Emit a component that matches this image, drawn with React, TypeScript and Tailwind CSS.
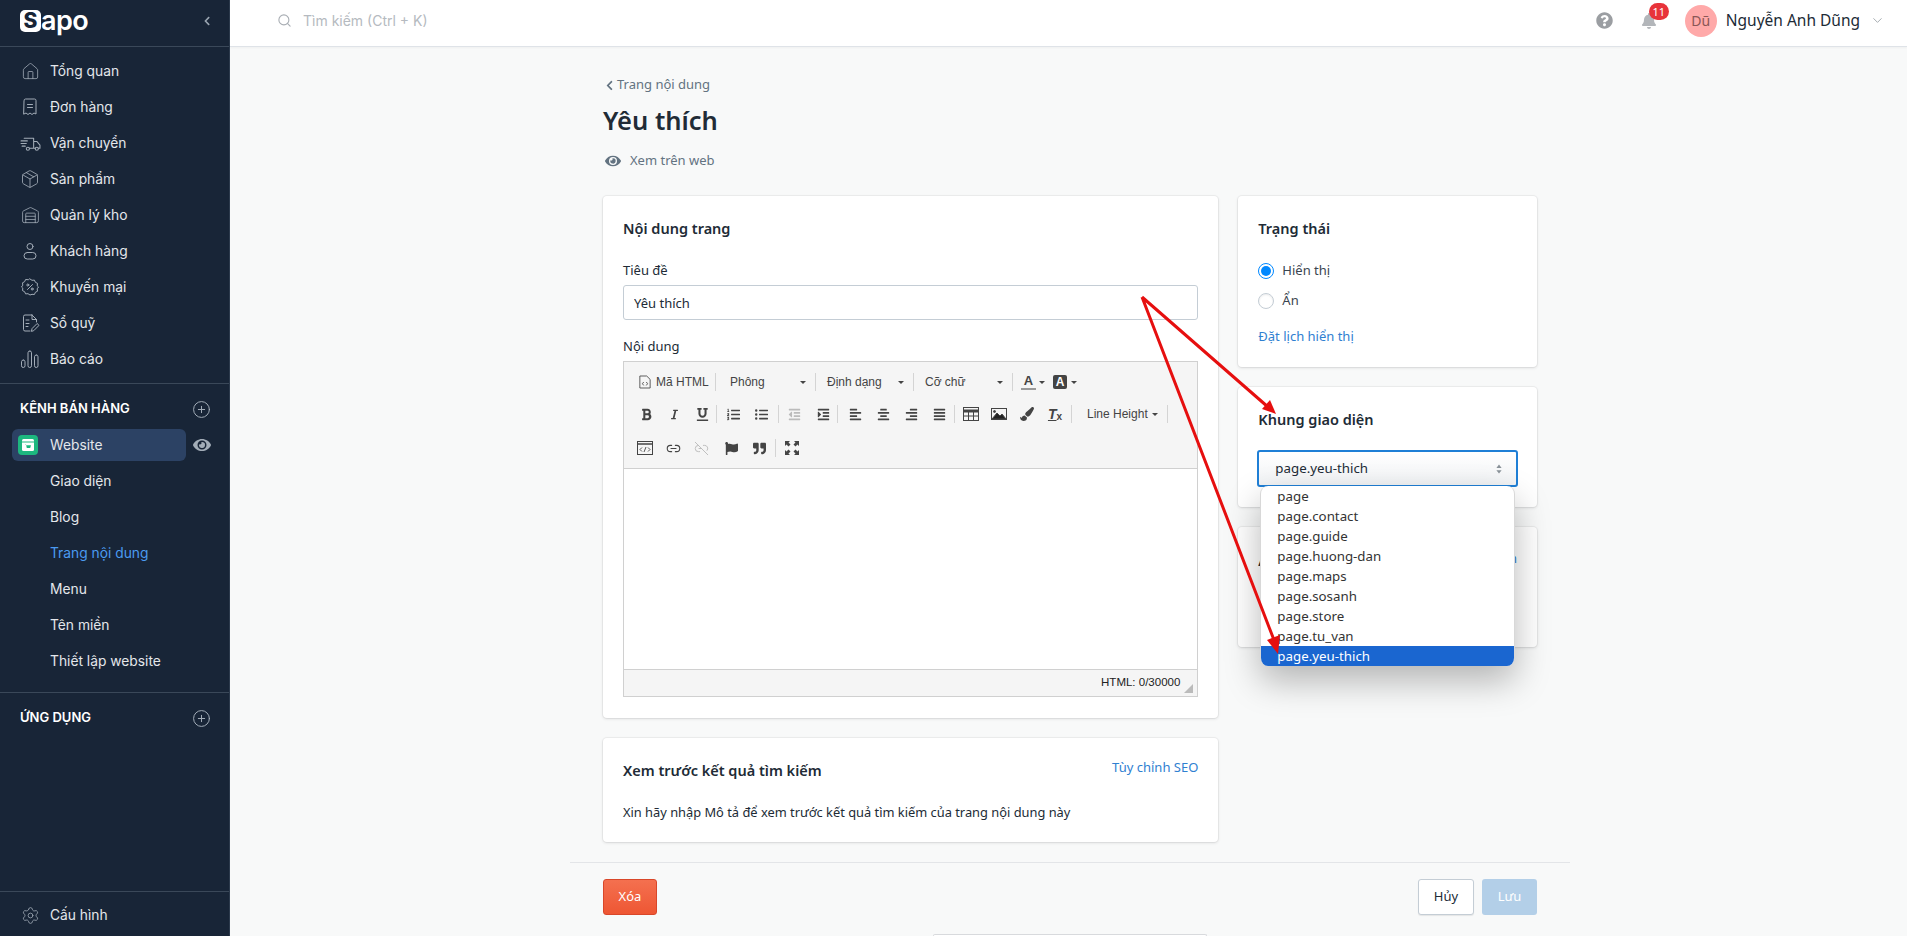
import { ReactNode } from 'react';
import {
    FaAlignCenter, FaAlignJustify, FaAlignLeft, FaAlignRight, FaBell, FaBold, FaChevronLeft, FaEye, FaIndent,
    FaItalic, FaListOl, FaListUl, FaOutdent, FaPaintBrush, FaQuestionCircle, FaQuoteRight, FaFlag, FaUnderline,
} from 'react-icons/fa';
import { ChevronDown, CirclePlus, House, Link2, Link2Off, Package, Search, Settings, Warehouse } from 'lucide-react';

const Svg = ({ children, className = 'w-5 h-5' }: { children: ReactNode; className?: string }) => (
    <svg viewBox="0 0 20 20" fill="none" stroke="currentColor" strokeWidth="1" strokeLinecap="round" strokeLinejoin="round" className={className}>
        {children}
    </svg>
);

const navItems: { label: string; icon: ReactNode }[] = [
    { label: 'Tổng quan', icon: <House size={19} strokeWidth={1} /> },
    {
        label: 'Đơn hàng',
        icon: (
            <Svg>
                <path d="M4 3.5a1.5 1.5 0 0 1 1.500-1.500h9a1.500 1.500 0 0 1 1.500 1.500v13.500l-2-1-2 1.500-2-1.500-2 1.500-2-1.500-2 1z" />
                <path d="M7.500 7.500h5M7.500 10.500h5" />
            </Svg>
        ),
    },
    {
        label: 'Vận chuyển',
        icon: (
            <Svg className="w-[21px] h-[21px]">
                <path d="M4 5h9v9.500H9M13 8h3l3 3.500v3h-1.500M13 14.500h1.500" />
                <circle cx="7.500" cy="15" r="1.500" />
                <circle cx="16" cy="15" r="1.500" />
                <path d="M1 7.500h6M1 10h5M2 12.500h3" />
            </Svg>
        ),
    },
    { label: 'Sản phẩm', icon: <Package size={20} strokeWidth={1} /> },
    { label: 'Quản lý kho', icon: <Warehouse size={19} strokeWidth={1} /> },
    {
        label: 'Khách hàng',
        icon: (
            <Svg>
                <circle cx="10" cy="5.500" r="3" />
                <rect x="4" y="11.500" width="12" height="6.500" rx="3.250" />
            </Svg>
        ),
    },
    {
        label: 'Khuyến mại',
        icon: (
            <Svg>
                <path d="M10 2l2 1.300 2.400-.2 1 2.200 2.100 1.100-.3 2.400L18.500 10l-1.300 1.800.3 2.400-2.100 1.100-1 2.200-2.400-.2L10 18l-2-1.300-2.400.2-1-2.200-2.100-1.100.3-2.400L1.500 10l1.300-1.800-.3-2.400 2.100-1.100 1-2.200 2.400.2z" />
                <path d="M7.500 12.500l5-5" />
                <circle cx="7.800" cy="8" r="1" />
                <circle cx="12.200" cy="12" r="1" />
            </Svg>
        ),
    },
    {
        label: 'Sổ quỹ',
        icon: (
            <Svg>
                <path d="M12 2H5a1.500 1.500 0 0 0-1.500 1.500v13A1.500 1.500 0 0 0 5 18h5M12 2l4.500 4.500V9M12 2v4.500h4.500" />
                <path d="M6 7h3M6 10.500h3M6 13.500h2" />
                <path d="M11.500 18l.6-2.500 5-5 1.900 1.900-5 5z" />
            </Svg>
        ),
    },
    {
        label: 'Báo cáo',
        icon: (
            <Svg>
                <rect x="1.500" y="11" width="3.500" height="7.500" rx="1.750" />
                <rect x="8" y="2" width="3.500" height="16.500" rx="1.750" />
                <rect x="14.500" y="6" width="3.500" height="12.500" rx="1.750" />
            </Svg>
        ),
    },
];

const subItems = ['Giao diện', 'Blog', 'Trang nội dung', 'Menu', 'Tên miền', 'Thiết lập website'];
const templates = ['page', 'page.contact', 'page.guide', 'page.huong-dan', 'page.maps', 'page.sosanh', 'page.store', 'page.tu_van', 'page.yeu-thich'];

function Sidebar() {
    return (
        <aside className="w-[230px] h-[936px] shrink-0 flex flex-col bg-[#182537] text-[13.8px] text-[#e4e7eb] font-['Inter',sans-serif] border-r border-[#2c3a4c]">
            <div className="h-[47px] flex items-center justify-between pl-5 pr-[17px] border-b border-[#3a4859]">
                <div className="flex items-center h-[24px] mb-[5px]">
                    <span className="w-[21px] h-[22px] rounded-[5px] bg-white text-[#182537] text-[21px] leading-[22px] font-extrabold text-center">S</span>
                    <span className="text-white text-[27px] leading-[24px] font-semibold tracking-[-0.5px]">apo</span>
                </div>
                <FaChevronLeft size={10} className="text-[#9aa5b1] mb-[5px]" />
            </div>
            <nav className="flex flex-col py-[6px] border-b border-[#3a4859]">
                {navItems.map(item => (
                    <div key={item.label} className="h-9 flex items-center">
                        <span className="w-[50px] pl-[18px] pr-2 flex justify-center text-[#a3adb8]">{item.icon}</span>
                        <span>{item.label}</span>
                    </div>
                ))}
            </nav>
            <div className="pt-[13px] pb-[13px] border-b border-[#3a4859]">
                <div className="h-6 flex items-center justify-between pl-5 pr-[18px] font-semibold text-white text-[13px]">
                    <span>KÊNH BÁN HÀNG</span>
                    <CirclePlus size={19} strokeWidth={1.25} className="text-[#a3adb8]" />
                </div>
                <div className="mt-2 h-8 flex items-center pr-[18px]">
                    <div className="ml-3 w-[174px] h-8 rounded-[6px] bg-[#2c4264] flex items-center pl-[6px]">
                        <span className="w-5 h-5 rounded-[4px] bg-[#1db77f] flex items-center justify-center">
                            <svg viewBox="0 0 14 14" className="w-[14px] h-[14px]">
                                <rect x="1" y="1" width="12" height="12" rx="1.500" fill="#fff" />
                                <rect x="1" y="3.500" width="12" height="1" fill="#1db77f" />
                                <path d="M4 6.500h1l.8 3.500h3.400l.8-2.800H5.200" fill="#1db77f" />
                            </svg>
                        </span>
                        <span className="ml-3">Website</span>
                    </div>
                    <FaEye size={18} className="ml-auto text-[#a3adb8]" />
                </div>
                <div className="mt-[2px] flex flex-col">
                    {subItems.map(s => (
                        <div key={s} className={`h-9 flex items-center pl-[50px] ${s === 'Trang nội dung' ? 'text-[#4b9bf0]' : ''}`}>{s}</div>
                    ))}
                </div>
            </div>
            <div className="flex-1 pt-[13px]">
                <div className="h-6 flex items-center justify-between pl-5 pr-[18px] font-semibold text-white text-[13px]">
                    <span>ỨNG DỤNG</span>
                    <CirclePlus size={19} strokeWidth={1.25} className="text-[#a3adb8]" />
                </div>
            </div>
            <div className="h-[45px] pt-[3px] flex items-center border-t border-[#3a4859]">
                <span className="w-[50px] pl-[18px] pr-2 flex justify-center text-[#a3adb8]"><Settings size={19} strokeWidth={1} /></span>
                <span>Cấu hình</span>
            </div>
        </aside>
    );
}

function TopBar() {
    return (
        <header className="h-[47px] pb-[5px] bg-white border-b border-[#dfe3e8] shadow-[0_1px_2px_rgba(0,0,0,0.04)] flex items-center pl-[47px] pr-[22px]">
            <Search size={15} strokeWidth={1.75} className="text-[#a8adb3]" />
            <span className="ml-[11px] text-[14px] text-[#b5bac0] font-['Inter',sans-serif]">Tìm kiếm (Ctrl + K)</span>
            <div className="ml-auto flex items-center">
                <FaQuestionCircle size={17} className="text-[#9b9ea2]" />
                <div className="relative ml-[28px] mr-[28px]">
                    <FaBell size={16} className="text-[#b3b6ba]" />
                    <span className="absolute -top-[10px] left-[8px] w-[20px] h-[17px] rounded-full bg-[#e8333a] text-white text-[11px] leading-[17px] text-center">11</span>
                </div>
                <span className="w-8 h-8 rounded-full bg-[#ffa9a9] text-[#8a5656] text-[14px] flex items-center justify-center">Dũ</span>
                <span className="ml-[9px] text-[15.5px] text-[#212b36]">Nguyễn Anh Dũng</span>
                <ChevronDown size={15} strokeWidth={1.5} className="ml-[10px] text-[#a0a6ac]" />
            </div>
        </header>
    );
}

const Sep = ({ className = '' }: { className?: string }) => <span className={`w-px h-[18px] bg-[#d4d4d4] ${className}`} />;
const Caret = ({ className = '' }: { className?: string }) => (
    <span className={`w-0 h-0 border-l-[3px] border-r-[3px] border-t-[3px] border-l-transparent border-r-transparent border-t-[#444] ${className}`} />
);
const Cell = ({ children, className = '' }: { children: ReactNode; className?: string }) => (
    <span className={`w-7 flex items-center justify-center ${className}`}>{children}</span>
);

function Toolbar() {
    return (
        <div className="h-[107px] bg-[#f5f5f5] border-b border-[#d0d0d0] text-[12px] text-[#444] font-['Liberation_Sans',sans-serif]">
            <div className="h-9 pt-1 flex items-center whitespace-nowrap">
                <svg viewBox="0 0 14 16" className="ml-[15px] w-3 h-[14px]" fill="none" stroke="#444" strokeWidth="1">
                    <path d="M1 1h8l4 4v10H1z" />
                    <path d="M5.500 8L4 10l1.500 2M8.500 8l1.500 2-1.500 2" />
                </svg>
                <span className="ml-[5px] w-[51px]">Mã HTML</span>
                <Sep className="ml-2" />
                <span className="ml-[14px] w-[70px]">Phông</span>
                <Caret />
                <Sep className="ml-[9px]" />
                <span className="ml-[11px] w-[71px]">Định dạng</span>
                <Caret />
                <Sep className="ml-[9px]" />
                <span className="ml-[11px] w-[72px]">Cỡ chữ</span>
                <Caret />
                <Sep className="ml-[9px]" />
                <span className="ml-[8px] w-[15px] text-center text-[13px] leading-[14px] font-bold border-b-[2px] border-[#999]">A</span>
                <Caret className="ml-[3px]" />
                <span className="ml-[8px] w-[14px] h-[14px] rounded-[2px] bg-[#444] text-white text-[12px] leading-[14px] text-center font-bold">A</span>
                <Caret className="ml-[4px]" />
            </div>
            <div className="h-[32px] pl-2 flex items-center text-[#444] whitespace-nowrap">
                <Cell><FaBold size={13} /></Cell>
                <Cell><FaItalic size={11} /></Cell>
                <Cell><FaUnderline size={13} /></Cell>
                <Sep />
                <Cell className="ml-[2px]"><FaListOl size={13} /></Cell>
                <Cell><FaListUl size={13} /></Cell>
                <Sep className="ml-[3px]" />
                <Cell className="ml-[1px] text-[#bbb]"><FaOutdent size={13} /></Cell>
                <Cell className="ml-[1px]"><FaIndent size={13} /></Cell>
                <Sep />
                <Cell className="ml-[3px]"><FaAlignLeft size={13} /></Cell>
                <Cell><FaAlignCenter size={13} /></Cell>
                <Cell><FaAlignRight size={13} /></Cell>
                <Cell><FaAlignJustify size={13} /></Cell>
                <Sep className="ml-[1px]" />
                <Cell className="ml-[2px]">
                    <svg viewBox="0 0 16 14" className="w-4 h-[14px]" fill="none" stroke="#444">
                        <rect x="0.500" y="0.500" width="15" height="13" />
                        <path d="M0 4h16" strokeWidth="3" />
                        <path d="M5.500 4v10M10.500 4v10M0 9h16" />
                    </svg>
                </Cell>
                <Cell>
                    <svg viewBox="0 0 16 12" className="w-4 h-3" fill="none" stroke="#444">
                        <rect x="0.500" y="0.500" width="15" height="11" />
                        <circle cx="3.500" cy="3.500" r="1" fill="#444" />
                        <path d="M1 11l5-6 3 3 2-2 4 5z" fill="#222" />
                    </svg>
                </Cell>
                <Cell><FaPaintBrush size={14} /></Cell>
                <Cell className="relative">
                    <span className="text-[14px] leading-[14px] font-bold italic underline">T</span>
                    <span className="text-[10px] leading-[10px] mt-[6px] font-bold">x</span>
                </Cell>
                <Sep className="ml-[2px]" />
                <span className="ml-[15px] w-[65px]">Line Height</span>
                <Caret />
                <Sep className="ml-[9px]" />
            </div>
            <div className="h-9 pl-[7px] flex items-center">
                <Cell>
                    <svg viewBox="0 0 16 14" className="w-4 h-[14px]" fill="none" stroke="#444">
                        <rect x="0.500" y="0.500" width="15" height="13" />
                        <path d="M0 3h16" strokeWidth="1.500" />
                        <path d="M5 6.500L3 8.500l2 2M11 6.500l2 2-2 2M9 6l-2 5" strokeWidth="0.900" />
                    </svg>
                </Cell>
                <Cell><Link2 size={15} strokeWidth={1.75} /></Cell>
                <Cell className="text-[#bbb]"><Link2Off size={15} strokeWidth={1.5} /></Cell>
                <Cell className="ml-[2px]"><FaFlag size={13} /></Cell>
                <Cell><FaQuoteRight size={13} /></Cell>
                <Sep className="ml-[2px]" />
                <Cell className="ml-[2px]">
                    <svg viewBox="0 0 14 14" className="w-[14px] h-[14px]" fill="#444">
                        <path d="M0 0h5L3.500 1.500 5.500 3.500 3.500 5.500 1.500 3.500 0 5zM14 0v5l-1.500-1.500-2 2-2-2 2-2L9 0zM0 14V9l1.500 1.500 2-2 2 2-2 2L5 14zM14 14H9l1.500-1.500-2-2 2-2 2 2L14 9z" />
                    </svg>
                </Cell>
            </div>
        </div>
    );
}

function Card({ className = '', children }: { className?: string; children: ReactNode }) {
    return <section className={`bg-white rounded-[4px] shadow-[0_0_0_1px_rgba(63,63,68,0.05),0_1px_3px_rgba(63,63,68,0.15)] ${className}`}>{children}</section>;
}

function Radio({ checked, label }: { checked?: boolean; label: string }) {
    return (
        <div className="h-5 flex items-center">
            <span className={`w-4 h-4 rounded-full flex items-center justify-center ${checked ? 'border border-[#0088ff]' : 'border border-[#c4cdd5] shadow-[inset_0_1px_2px_rgba(0,0,0,0.08)]'}`}>
                {checked && <span className="w-[10px] h-[10px] rounded-full bg-[#0088ff]" />}
            </span>
            <span className="ml-2 text-[#3a4550]">{label}</span>
        </div>
    );
}

function Arrows() {
    return (
        <svg className="absolute z-20 inset-0 w-[1907px] h-[936px] pointer-events-none" viewBox="0 0 1907 936">
            <path d="M1142 297L1268 407M1142 297L1274 640" stroke="#e60f0f" strokeWidth="3" fill="none" />
            <polygon points="1276,414 1262,409 1270,400" fill="#e60f0f" />
            <polygon points="1278,654 1267,640 1280,635" fill="#e60f0f" />
        </svg>
    );
}

export default function App() {
    return (
        <div className="relative w-[1907px] h-[936px] overflow-hidden flex bg-[#f8f9f9] text-[14px] text-[#212b36] font-['Noto_Sans',sans-serif]">
            <Sidebar />
            <div className="flex-1 min-w-0">
                <TopBar />
                <main className="w-[1000px] ml-[340px]">
                    <div className="px-[33px] pt-[28px]">
                        <div className="h-5 flex items-center text-[#637381] text-[13px]">
                            <FaChevronLeft size={11} className="ml-[1px]" />
                            <span className="ml-[2px]">Trang nội dung</span>
                        </div>
                        <h1 className="mt-[7px] h-9 text-[25.5px] leading-9 font-semibold">Yêu thích</h1>
                        <div className="mt-[13px] h-5 flex items-center text-[#637381] text-[13px]">
                            <FaEye size={16} className="ml-[2px]" />
                            <span className="ml-[9px]">Xem trên web</span>
                        </div>
                        <div className="mt-[25px] flex gap-5 items-start">
                            <div className="w-[616px] flex flex-col gap-5">
                                <Card className="h-[522px] px-5 pt-[21px]">
                                    <h2 className="h-[22px] leading-[22px] text-[14.5px] font-semibold">Nội dung trang</h2>
                                    <label className="block mt-[21px] h-5 leading-5 text-[13px]">Tiêu đề</label>
                                    <input readOnly value="Yêu thích" className="mt-[5px] w-full h-[35px] px-[10px] text-[13px] rounded-[3px] border border-[#c4cdd5] bg-white outline-none" />
                                    <label className="block mt-4 h-5 leading-5 text-[13px]">Nội dung</label>
                                    <div className="mt-[5px] h-[336px] flex flex-col border border-[#d0d0d0]">
                                        <Toolbar />
                                        <div className="flex-1 bg-white" />
                                        <div className="relative h-[27px] bg-[#f5f5f5] border-t border-[#d0d0d0] flex items-center justify-end pr-[17px] text-[11.5px] text-[#222] font-['Liberation_Sans',sans-serif]">
                                            HTML: 0/30000
                                            <span className="absolute right-[4px] bottom-[3px] w-0 h-0 border-b-[9px] border-l-[9px] border-b-[#bbb] border-l-transparent" />
                                        </div>
                                    </div>
                                </Card>
                                <Card className="h-[104px] px-5 pt-5">
                                    <div className="flex justify-between items-start">
                                        <h2 className="h-6 leading-6 text-[14.5px] font-semibold">Xem trước kết quả tìm kiếm</h2>
                                        <a className="text-[13px] text-[#2f80d1]">Tùy chỉnh SEO</a>
                                    </div>
                                    <p className="mt-[21px] text-[12.85px]">Xin hãy nhập Mô tả để xem trước kết quả tìm kiếm của trang nội dung này</p>
                                </Card>
                            </div>
                            <div className="w-[299px] flex flex-col gap-5">
                                <Card className="h-[171px] px-5 pt-[21px]">
                                    <h2 className="h-[22px] leading-[22px] text-[14.5px] font-semibold">Trạng thái</h2>
                                    <div className="mt-[22px] flex flex-col gap-[10px] text-[13px]">
                                        <Radio checked label="Hiển thị" />
                                        <Radio label="Ẩn" />
                                    </div>
                                    <a className="block mt-[16px] text-[13px] text-[#2f80d1]">Đặt lịch hiển thị</a>
                                </Card>
                                <Card className="relative h-[120px] px-5 pt-[21px]">
                                    <h2 className="h-[22px] leading-[22px] text-[14.5px] font-semibold">Khung giao diện</h2>
                                    <div className="mt-5 h-[37px] -mx-[1px] rounded-[3px] border-2 border-[#1f7fd6] bg-gradient-to-b from-white to-[#f1f3f5] flex items-center justify-between pl-4 pr-[14px] text-[13.3px]">
                                        <span>page.yeu-thich</span>
                                        <svg viewBox="0 0 8 12" className="w-[6px] h-[10px]" fill="#8a9299"><path d="M4 0l3.500 4.500h-7zM4 12L.5 7.500h7z" /></svg>
                                    </div>
                                    <ul className="absolute z-10 left-[22px] top-[99px] w-[255px] h-[180px] rounded-[8px] overflow-hidden bg-white border-x border-[#d8d8d8] shadow-[0_15px_35px_rgba(0,0,0,0.28)] text-[13.3px] leading-5 text-[#333]">
                                        {templates.map(t => (
                                            <li key={t} className={`h-5 pl-4 ${t === 'page.yeu-thich' ? 'bg-[#1a66d0] text-white' : ''}`}>{t}</li>
                                        ))}
                                    </ul>
                                </Card>
                                <Card className="h-[120px] px-5 pt-[22px]">
                                    <div className="flex justify-between">
                                        <h2 className="h-[22px] leading-[22px] text-[14.5px] font-semibold">Ảnh đại diện</h2>
                                        <a className="text-[13px] text-[#2f80d1]">Thêm ảnh</a>
                                    </div>
                                </Card>
                            </div>
                        </div>
                    </div>
                    <div className="mt-5 pt-[16px] px-[33px] border-t border-[#e3e5e8] flex items-start justify-between">
                        <button className="w-[54px] h-9 rounded-[3px] border border-[#d9472a] bg-gradient-to-b from-[#f4704f] to-[#ee5633] text-white text-[13px]">Xóa</button>
                        <div className="flex gap-2">
                            <button className="w-[56px] h-9 rounded-[3px] border border-[#c4cdd5] bg-white text-[13px] shadow-[0_1px_1px_rgba(0,0,0,0.08)]">Hủy</button>
                            <button className="w-[55px] h-9 rounded-[3px] bg-[#b3cfe8] text-white text-[13px]">Lưu</button>
                        </div>
                    </div>
                </main>
            </div>
            <div className="absolute bottom-0 left-[933px] w-[274px] h-[2px] rounded-t-[6px] bg-white border-t border-x border-[#d8dadd]" />
            <Arrows />
        </div>
    );
}
